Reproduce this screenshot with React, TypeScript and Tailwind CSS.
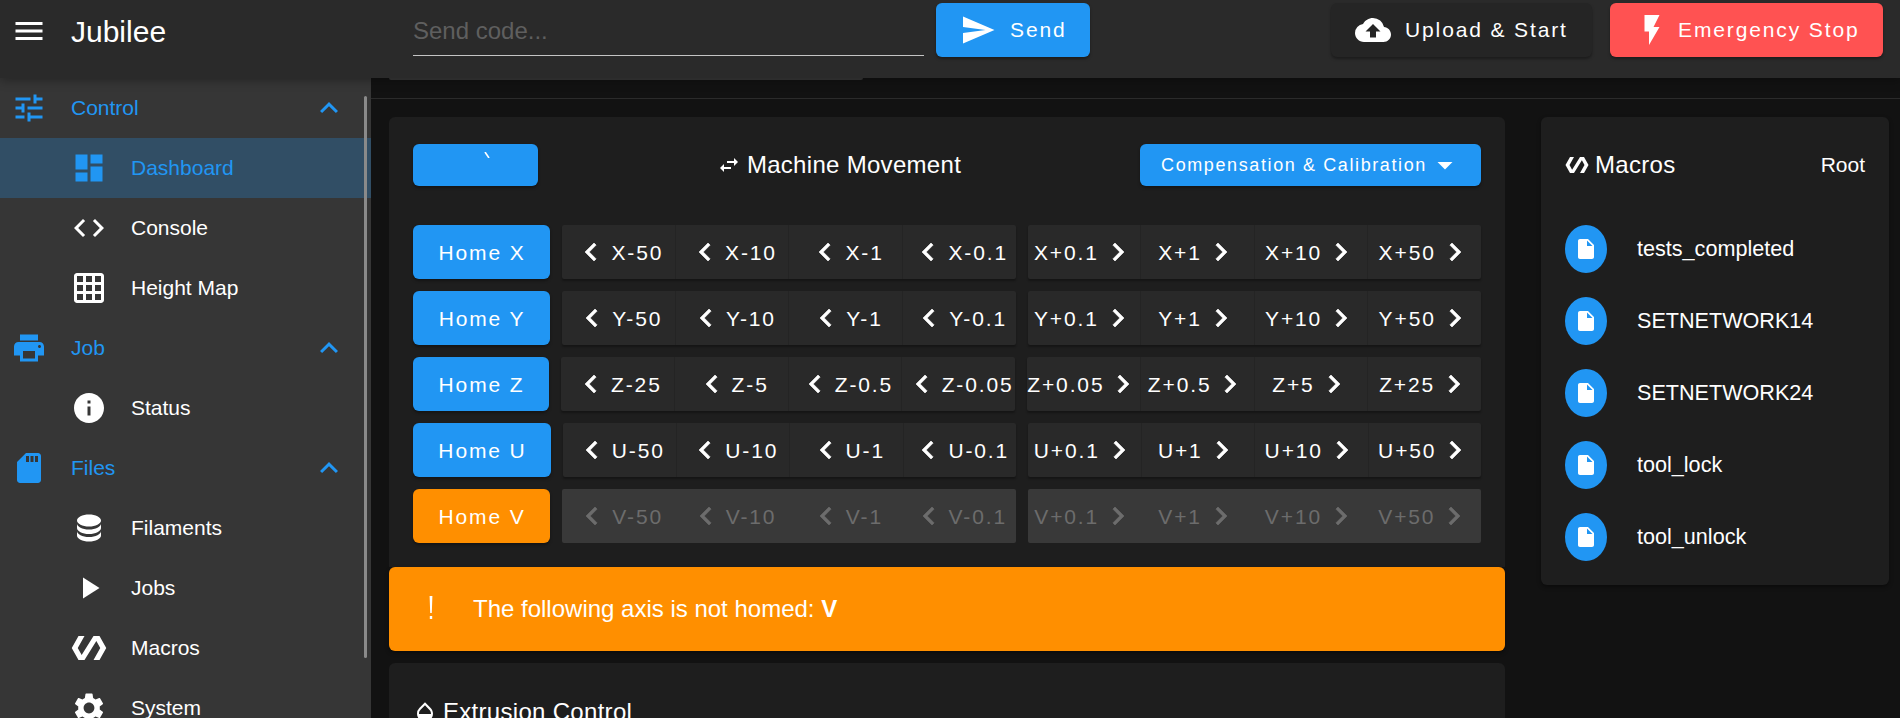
import type { ReactNode } from 'react';
import {
  MdCloudUpload,
  MdCode,
  MdDashboard,
  MdExpandLess,
  MdFlashOn,
  MdGridOn,
  MdInfo,
  MdInsertDriveFile,
  MdMenu,
  MdArrowDropDown,
  MdOpacity,
  MdPlayArrow,
  MdPolymer,
  MdPrint,
  MdSdStorage,
  MdSend,
  MdSettings,
  MdTune,
} from 'react-icons/md';

const AXES = [
  { name: 'X', homeW: 'w-[137px]', minus: ['50', '10', '1', '0.1'], plus: ['0.1', '1', '10', '50'] },
  { name: 'Y', homeW: 'w-[137px]', minus: ['50', '10', '1', '0.1'], plus: ['0.1', '1', '10', '50'] },
  { name: 'Z', homeW: 'w-[136px]', minus: ['25', '5', '0.5', '0.05'], plus: ['0.05', '0.5', '5', '25'] },
  { name: 'U', homeW: 'w-[138px]', minus: ['50', '10', '1', '0.1'], plus: ['0.1', '1', '10', '50'] },
  { name: 'V', homeW: 'w-[137px]', minus: ['50', '10', '1', '0.1'], plus: ['0.1', '1', '10', '50'], unhomed: true },
];

const MACROS = ['tests_completed', 'SETNETWORK14', 'SETNETWORK24', 'tool_lock', 'tool_unlock'];

function DatabaseIcon() {
  return (
    <svg viewBox="0 0 24 24" width={36} height={36} fill="currentColor">
      <path d="M12,3C7.58,3 4,4.79 4,7C4,9.21 7.58,11 12,11C16.42,11 20,9.21 20,7C20,4.79 16.42,3 12,3M4,9V12C4,14.21 7.58,16 12,16C16.42,16 20,14.21 20,12V9C20,11.21 16.42,13 12,13C7.58,13 4,11.21 4,9M4,14V17C4,19.21 7.58,21 12,21C16.42,21 20,19.21 20,17V14C20,16.21 16.42,18 12,18C7.58,18 4,16.21 4,14Z" />
    </svg>
  );
}

function Chevron({ dir }: { dir: '-' | '+' }) {
  return (
    <svg
      viewBox="0 0 24 24"
      width={36}
      height={36}
      fill="currentColor"
      stroke="currentColor"
      strokeWidth={0.4}
      className={dir === '-' ? 'shrink-0' : '-ml-[1px] -mr-[2px] shrink-0'}
    >
      <path
        d={
          dir === '-'
            ? 'M15.41 7.41L14 6l-6 6 6 6 1.41-1.41L10.83 12z'
            : 'M10 6L8.59 7.41 13.17 12l-4.58 4.59L10 18l6-6z'
        }
      />
    </svg>
  );
}

function NavGroup({ icon, label }: { icon: ReactNode; label: string }) {
  return (
    <div className="flex h-[60px] items-center pl-[11px] pr-6 text-[21px] text-[#2196f3]">
      {icon}
      <span className="ml-[24px]">{label}</span>
      <MdExpandLess size={36} className="ml-auto" />
    </div>
  );
}

function NavItem({ icon, label, active }: { icon: ReactNode; label: string; active?: boolean }) {
  return (
    <div
      className={
        active
          ? 'flex h-[60px] items-center pl-[71px] text-[21px] text-[#2196f3] bg-[#314e65]'
          : 'flex h-[60px] items-center pl-[71px] text-[21px] text-white'
      }
    >
      {icon}
      <span className="ml-[24px]">{label}</span>
    </div>
  );
}

function StepGroup({ axis, steps, dir, disabled }: { axis: string; steps: string[]; dir: '-' | '+'; disabled?: boolean }) {
  return (
    <div
      className={
        disabled
          ? 'flex flex-1 basis-0 rounded-[2px] bg-[#393939] text-[#6c6c6c]'
          : 'flex flex-1 basis-0 rounded-[2px] bg-[#292929] text-white shadow-[0_2px_2px_rgba(0,0,0,0.3)]'
      }
    >
      {steps.map((step, i) => (
        <div
          key={step}
          className={
            'flex min-w-0 flex-1 basis-0 items-center justify-center gap-[2px] whitespace-nowrap text-[21px] tracking-[1.875px]' +
            (i > 0 && !disabled ? ' border-l border-[#242424]' : '')
          }
        >
          {dir === '-' && <Chevron dir="-" />}
          <span className="pt-[1px]">
            {axis}
            {dir}
            {step}
          </span>
          {dir === '+' && <Chevron dir="+" />}
        </div>
      ))}
    </div>
  );
}

export default function App() {
  return (
    <div className="flex h-[718px] flex-col overflow-hidden bg-[#121212] font-['Liberation_Sans',Arial,sans-serif] text-white">
      {/* App bar */}
      <header className="relative z-20 flex h-[78px] shrink-0 items-start bg-[#2a2a2a] shadow-[0_2px_10px_rgba(0,0,0,0.35)]">
        <div className="flex h-[62px] w-[413px] items-center pl-[11px]">
          <MdMenu size={36} />
          <span className="ml-[24px] text-[30px]">Jubilee</span>
        </div>
        <div className="flex h-[56px] w-[511px] items-center border-b-[1.5px] border-[#c4c4c4] pt-[6px] text-[24px] text-[#5f5f5f]">
          Send code...
        </div>
        <button className="ml-3 mt-[3px] flex h-[54px] w-[154px] items-center gap-[14px] rounded-[6px] bg-[#2196f3] pl-6 text-[21px] tracking-[1.875px] shadow-[0_2px_3px_rgba(0,0,0,0.35)]">
          <MdSend size={36} />
          Send
        </button>
        <button className="ml-auto mt-[3px] flex h-[54px] w-[261px] items-center gap-[14px] rounded-[6px] bg-[#252525] pl-6 text-[21px] tracking-[1.875px] shadow-[0_2px_3px_rgba(0,0,0,0.35)]">
          <MdCloudUpload size={36} />
          Upload &amp; Start
        </button>
        <button className="ml-[18px] mr-[17px] mt-[3px] flex h-[54px] w-[273px] items-center gap-2 rounded-[6px] bg-[#ff5252] pl-6 text-[21px] tracking-[1.875px] shadow-[0_2px_3px_rgba(0,0,0,0.35)]">
          <MdFlashOn size={36} />
          Emergency Stop
        </button>
      </header>

      <div className="flex min-h-0 flex-1">
        {/* Navigation drawer */}
        <nav className="relative w-[371px] shrink-0 overflow-hidden bg-[#363636]">
          <NavGroup icon={<MdTune size={36} />} label="Control" />
          <NavItem active icon={<MdDashboard size={36} />} label="Dashboard" />
          <NavItem icon={<MdCode size={36} />} label="Console" />
          <NavItem icon={<MdGridOn size={36} />} label="Height Map" />
          <NavGroup icon={<MdPrint size={36} />} label="Job" />
          <NavItem icon={<MdInfo size={36} />} label="Status" />
          <NavGroup icon={<MdSdStorage size={36} />} label="Files" />
          <NavItem icon={<DatabaseIcon />} label="Filaments" />
          <NavItem icon={<MdPlayArrow size={36} />} label="Jobs" />
          <NavItem icon={<MdPolymer size={36} />} label="Macros" />
          <NavItem icon={<MdSettings size={36} />} label="System" />
          {/* scrollbar thumb */}
          <div className="absolute right-[4px] top-[18px] h-[562px] w-[3px] rounded-full bg-[#8a8a8a]" />
        </nav>

        <main className="min-w-0 flex-1 pl-[18px] pr-[11px]">
          {/* bottom edge of the tool status panel */}
          <div className="h-[2px] w-[474px] rounded-b-[3px] bg-[#383838]" />
          <div className="-ml-[18px] -mr-[11px] mt-[18px] border-t border-[#2b2b2b]" />

          <div className="mt-[18px] flex gap-9">
            <div className="w-[1116px] shrink-0">
              <section className="rounded-t-[6px] bg-[#1e1e1e] px-6 pb-6 pt-[27px]">
                <div className="flex items-center justify-between">
                  <button className="flex h-[42px] w-[125px] items-start justify-center rounded-[6px] bg-[#2196f3] shadow-[0_2px_3px_rgba(0,0,0,0.35)]">
                    <svg viewBox="0 0 6 6" width={6} height={6} className="ml-[22px] mt-2" stroke="white" strokeWidth={1.6}>
                      <line x1="1" y1="0" x2="5" y2="6" />
                    </svg>
                  </button>
                  <div className="flex items-center gap-[6px] text-[24px] tracking-[0.3px]">
                    <svg viewBox="0 0 24 24" width={24} height={24} fill="currentColor">
                      <path d="M21,9L17,5V8H10V10H17V13M7,11L3,15L7,19V16H14V14H7V11Z" />
                    </svg>
                    Machine Movement
                  </div>
                  <button className="flex h-[42px] w-[341px] items-center justify-center rounded-[6px] bg-[#2196f3] pl-[3px] text-[18px] tracking-[1.607px] shadow-[0_2px_3px_rgba(0,0,0,0.35)]">
                    Compensation &amp; Calibration
                    <MdArrowDropDown size={36} />
                  </button>
                </div>

                <div className="mt-[39px] flex flex-col gap-3">
                  {AXES.map((axis) => (
                    <div key={axis.name} className="flex h-[54px] gap-3">
                      <button
                        className={
                          axis.homeW +
                          (axis.unhomed ? ' bg-[#ff8f00]' : ' bg-[#2196f3]') +
                          ' shrink-0 rounded-[6px] pl-[1px] pt-[1px] text-[21px] tracking-[1.875px] shadow-[0_2px_3px_rgba(0,0,0,0.35)]'
                        }
                      >
                        Home {axis.name}
                      </button>
                      <StepGroup axis={axis.name} steps={axis.minus} dir="-" disabled={axis.unhomed} />
                      <StepGroup axis={axis.name} steps={axis.plus} dir="+" disabled={axis.unhomed} />
                    </div>
                  ))}
                </div>
              </section>

              <div className="flex h-[84px] items-center rounded-[6px] bg-[#ff8f00] pl-6 text-[24px] shadow-[0_2px_4px_rgba(0,0,0,0.4)]">
                <svg viewBox="0 0 6 24" width={6} height={24} fill="white" className="ml-[15px] mb-[3px]">
                  <path d="M1.6 0H4.4L3.8 17H2.2ZM1.8 20H4.2V23H1.8Z" />
                </svg>
                <span className="ml-[39px]">
                  The following axis is not homed: <b>V</b>
                </span>
              </div>

              <section className="mt-3 h-[200px] rounded-[6px] bg-[#1e1e1e] px-6 pt-[31px]">
                <div className="flex items-center gap-[6px] text-[24px] tracking-[0.3px]">
                  <MdOpacity size={24} />
                  Extrusion Control
                </div>
              </section>
            </div>

            <aside className="h-[468px] w-[348px] shrink-0 rounded-[6px] bg-[#1e1e1e] px-6 pt-[30px] shadow-[0_2px_4px_rgba(0,0,0,0.4)]">
              <div className="flex h-9 items-center justify-between">
                <div className="flex items-center gap-[6px] text-[24px] tracking-[0.3px]">
                  <MdPolymer size={24} />
                  Macros
                </div>
                <span className="text-[21px]">Root</span>
              </div>
              <ul className="mt-[42px] flex flex-col gap-6">
                {MACROS.map((name) => (
                  <li key={name} className="flex h-12 items-center gap-[30px] text-[21.6px]">
                    <span className="flex h-12 w-[42px] shrink-0 items-center justify-center rounded-[50%] bg-[#2196f3]">
                      <MdInsertDriveFile size={24} />
                    </span>
                    <span className="pt-[1px]">{name}</span>
                  </li>
                ))}
              </ul>
            </aside>
          </div>
        </main>
      </div>
    </div>
  );
}
